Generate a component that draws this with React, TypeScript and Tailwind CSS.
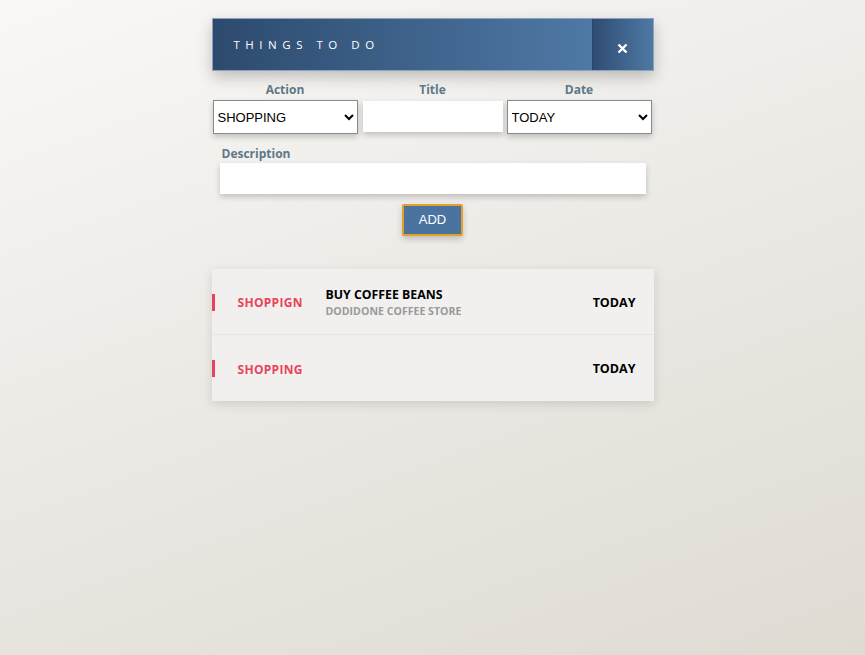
import { useState } from 'react';

const font = { fontFamily: '"Open Sans", "Liberation Sans", sans-serif' };

type Item = { action: string; title?: string; desc?: string; date: string };

const items: Item[] = [
  { action: 'SHOPPIGN', title: 'BUY COFFEE BEANS', desc: 'DODIDONE COFFEE STORE', date: 'TODAY' },
  { action: 'SHOPPING', date: 'TODAY' },
];

function TodoRow({ item, last }: { item: Item; last: boolean }) {
  return (
    <li
      className={`relative flex h-[66px] items-center pl-[26px] pr-[18px] pt-[3px] ${
        last ? '' : 'border-b border-[#e6e5e2]'
      }`}
    >
      <span className="absolute left-0 top-[25px] h-[17px] w-[3px] bg-[#e8435a]" />
      <span className="w-[88px] text-[12px] font-bold tracking-[0.3px] text-[#e8435a]">
        {item.action}
      </span>
      <div className="flex flex-1 flex-col leading-[16px]">
        {item.title && <span className="text-[12.3px] font-bold text-black">{item.title}</span>}
        {item.desc && <span className="text-[10.6px] font-bold text-[#9a9a9a]">{item.desc}</span>}
      </div>
      <span className="text-[12.5px] font-bold text-black">{item.date}</span>
    </li>
  );
}

export default function App() {
  const [action, setAction] = useState('SHOPPING');
  const [date, setDate] = useState('TODAY');

  return (
    <div
      className="flex min-h-[655px] w-full justify-center bg-[linear-gradient(160deg,#f9f8f6_0%,#ebe9e4_50%,#dfdbd3_100%)]"
      style={font}
    >
      <div className="mt-[18px] flex w-[442px] flex-col">
        <header className="flex h-[53px] border border-[#8da2bb] shadow-[0_6px_14px_rgba(0,0,0,0.22)]">
          <div className="flex flex-1 items-center bg-[linear-gradient(90deg,#2d4a6e,#4e79a5)] pl-[21px]">
            <h1 className="text-[11.5px] tracking-[0.48em] text-white">THINGS TO DO</h1>
          </div>
          <button className="flex w-[61px] items-center justify-center border-l border-[#2a4466] bg-[linear-gradient(90deg,#2f4c72,#4e79a5)] pt-[8px]">
            <svg width="11" height="11" viewBox="0 0 11 11">
              <path d="M1.5 1.5 L9.5 9.5 M9.5 1.5 L1.5 9.5" stroke="white" strokeWidth="2.4" />
            </svg>
          </button>
        </header>

        <form className="flex flex-col">
          <div className="mt-[11px] flex gap-[5px] pl-[1px]">
            <label className="flex w-[145px] flex-col items-center">
              <span className="text-[12px] font-bold leading-[16px] text-[#5d7888]">Action</span>
              <select
                value={action}
                onChange={(e) => setAction(e.target.value)}
                className="mt-[2px] h-[34px] w-full border border-[#8a8a8a] bg-white pl-0 pr-[2px] text-[13px] text-black shadow-[0_3px_6px_rgba(0,0,0,0.2)]"
                style={{ fontFamily: '"Liberation Sans", Arial, sans-serif' }}
              >
                <option>SHOPPING</option>
                <option>WORK</option>
              </select>
            </label>
            <label className="flex w-[140px] flex-col items-center">
              <span className="text-[12px] font-bold leading-[16px] text-[#5d7888]">Title</span>
              <input className="mt-[3px] h-[31px] w-full bg-white shadow-[0_3px_6px_rgba(0,0,0,0.2)] outline-none" />
            </label>
            <label className="ml-[-1px] flex w-[145px] flex-col items-center">
              <span className="text-[12px] font-bold leading-[16px] text-[#5d7888]">Date</span>
              <select
                value={date}
                onChange={(e) => setDate(e.target.value)}
                className="mt-[2px] h-[34px] w-full border border-[#8a8a8a] bg-white pl-0 pr-[2px] text-[13px] text-black shadow-[0_3px_6px_rgba(0,0,0,0.2)]"
                style={{ fontFamily: '"Liberation Sans", Arial, sans-serif' }}
              >
                <option>TODAY</option>
                <option>TOMORROW</option>
              </select>
            </label>
          </div>

          <label className="mt-[12px] flex flex-col px-[8px]">
            <span className="pl-[2px] text-[12px] font-bold leading-[16px] text-[#5d7888]">
              Description
            </span>
            <input className="mt-[1px] h-[31px] w-full bg-white shadow-[0_3px_6px_rgba(0,0,0,0.2)] outline-none" />
          </label>

          <div className="mt-[10px] flex justify-center">
            <button
              type="button"
              className="h-[32px] w-[61px] rounded-[2px] border-2 border-[#e3a12a] bg-[#4a73a0] text-[13px] text-white shadow-[0_3px_6px_rgba(0,0,0,0.2)]"
              style={{ fontFamily: '"Liberation Sans", Arial, sans-serif' }}
            >
              ADD
            </button>
          </div>
        </form>

        <ul className="mt-[33px] bg-[#f1f0ee] shadow-[0_3px_10px_rgba(0,0,0,0.12)]">
          {items.map((item, i) => (
            <TodoRow key={i} item={item} last={i === items.length - 1} />
          ))}
        </ul>
      </div>
    </div>
  );
}
